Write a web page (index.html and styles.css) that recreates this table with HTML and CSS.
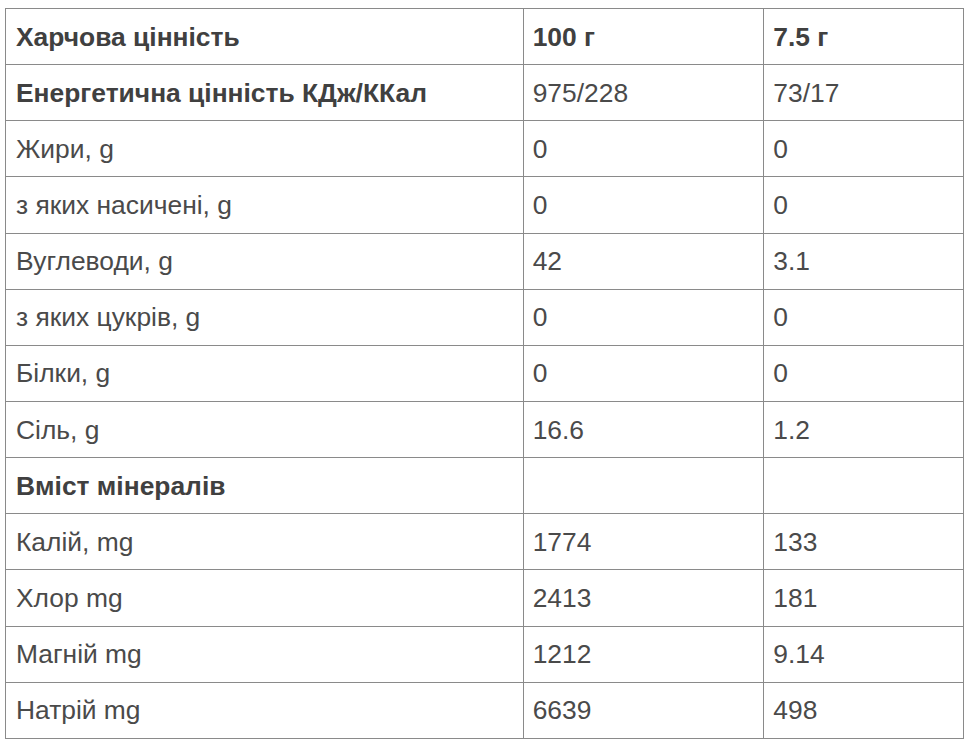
FILE: index.html
```html
<!DOCTYPE html>
<html lang="uk">
<head>
<meta charset="utf-8">
<title>Харчова цінність</title>
<link rel="stylesheet" href="styles.css">
</head>
<body>
<table class="nutrition">
  <colgroup>
    <col class="col-name">
    <col class="col-100">
    <col class="col-portion">
  </colgroup>
  <tbody>
    <tr class="head"><td>Харчова цінність</td><td>100 г</td><td>7.5 г</td></tr>
    <tr><td class="strong">Енергетична цінність КДж/ККал</td><td>975/228</td><td>73/17</td></tr>
    <tr><td>Жири, g</td><td>0</td><td>0</td></tr>
    <tr><td>з яких насичені, g</td><td>0</td><td>0</td></tr>
    <tr><td>Вуглеводи, g</td><td>42</td><td>3.1</td></tr>
    <tr><td>з яких цукрів, g</td><td>0</td><td>0</td></tr>
    <tr><td>Білки, g</td><td>0</td><td>0</td></tr>
    <tr><td>Сіль, g</td><td>16.6</td><td>1.2</td></tr>
    <tr><td class="strong">Вміст мінералів</td><td></td><td></td></tr>
    <tr><td>Калій, mg</td><td>1774</td><td>133</td></tr>
    <tr><td>Хлор mg</td><td>2413</td><td>181</td></tr>
    <tr><td>Магній mg</td><td>1212</td><td>9.14</td></tr>
    <tr><td>Натрій mg</td><td>6639</td><td>498</td></tr>
  </tbody>
</table>
</body>
</html>
```
FILE: styles.css
```css
html, body {
  margin: 0;
  padding: 0;
  background: #ffffff;
}
body {
  padding: 8px 0 0 5px;
  font-family: "Liberation Sans", Arial, sans-serif;
  color: #4a4a4a;
}
.nutrition {
  border-collapse: collapse;
  table-layout: fixed;
  width: 957.7px;
}
.col-name { width: 517.7px; }
.col-100 { width: 240.6px; }
.col-portion { width: 199.4px; }
.nutrition td {
  border: 1px solid #8a8a8a;
  padding: 0 9px 0 9px;
  height: 55.15px;
  font-size: 26.4px;
  line-height: 30px;
  vertical-align: middle;
  white-space: nowrap;
}
.nutrition td:first-child {
  padding-left: 10px;
}
.nutrition .head td,
.nutrition td.strong {
  font-weight: bold;
  color: #404040;
}
```
